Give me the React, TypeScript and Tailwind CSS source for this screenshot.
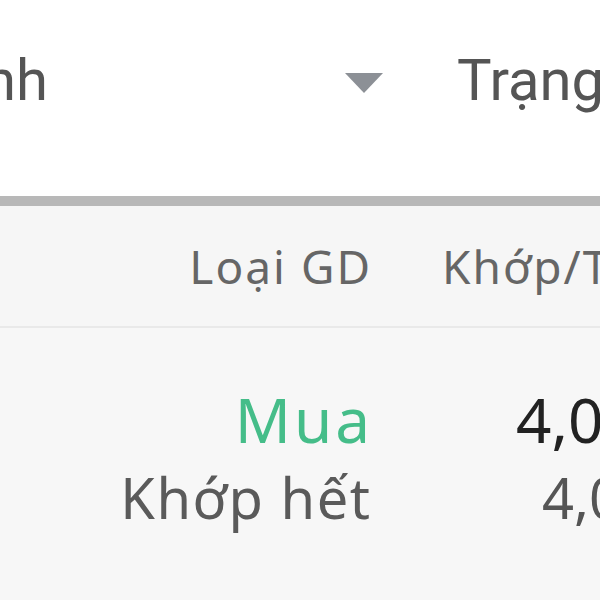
import React from "react";

export default function App() {
  return (
    <div className="w-[600px] h-[600px] overflow-hidden bg-[#f6f6f6] flex flex-col">
      {/* Tab / filter bar */}
      <div className="h-[196px] bg-white flex items-start pt-[44px] shrink-0" style={{ fontFamily: "Roboto, sans-serif" }}>
        <div className="w-[48px] flex justify-end shrink-0">
          <span className="whitespace-nowrap text-[58px] leading-[72px] text-[#555555]">Loại lệnh</span>
        </div>
        <div className="w-[297px] shrink-0" />
        <div className="pt-[29px] shrink-0">
          <svg width="38" height="20" viewBox="0 0 38 20">
            <polygon points="0,0 38,0 19,20" fill="#8c9096" />
          </svg>
        </div>
        <div className="w-[74px] shrink-0" />
        <span className="whitespace-nowrap text-[58px] leading-[72px] text-[#555555]">Trạng thái</span>
      </div>
      <div className="h-[10px] bg-[#b8b8b8] shrink-0" />
      {/* Table header */}
      <div
        className="h-[122px] bg-[#f6f6f6] border-b-2 border-[#e9e9e9] flex items-center shrink-0"
        style={{ fontFamily: "'Noto Sans', sans-serif" }}
      >
        <div className="w-[370px] flex justify-end shrink-0">
          <span className="whitespace-nowrap text-[46px] tracking-[2px] mr-[-2px] text-[#666666]">Loại GD</span>
        </div>
        <div className="pl-[72px] shrink-0">
          <span className="whitespace-nowrap text-[46px] tracking-[2px] text-[#666666]">Khớp/TL</span>
        </div>
      </div>
      {/* Row */}
      <div className="flex-1 bg-[#f7f7f7] pt-[52px] flex" style={{ fontFamily: "'Noto Sans', sans-serif" }}>
        <div className="w-[370px] flex flex-col items-end shrink-0">
          <span className="whitespace-nowrap text-[62px] leading-[78px] tracking-[3px] mr-[-3px] text-[#45bd89]">Mua</span>
          <span className="whitespace-nowrap text-[56px] leading-[78px] tracking-[1.5px] mr-[-1.5px] text-[#5a5a5a]">Khớp hết</span>
        </div>
        <div className="flex flex-col shrink-0">
          <span className="whitespace-nowrap text-[62px] leading-[78px] text-[#222222] pl-[146px]">4,000</span>
          <span className="whitespace-nowrap text-[56px] leading-[78px] text-[#555555] pl-[172px]">4,000</span>
        </div>
      </div>
    </div>
  );
}
